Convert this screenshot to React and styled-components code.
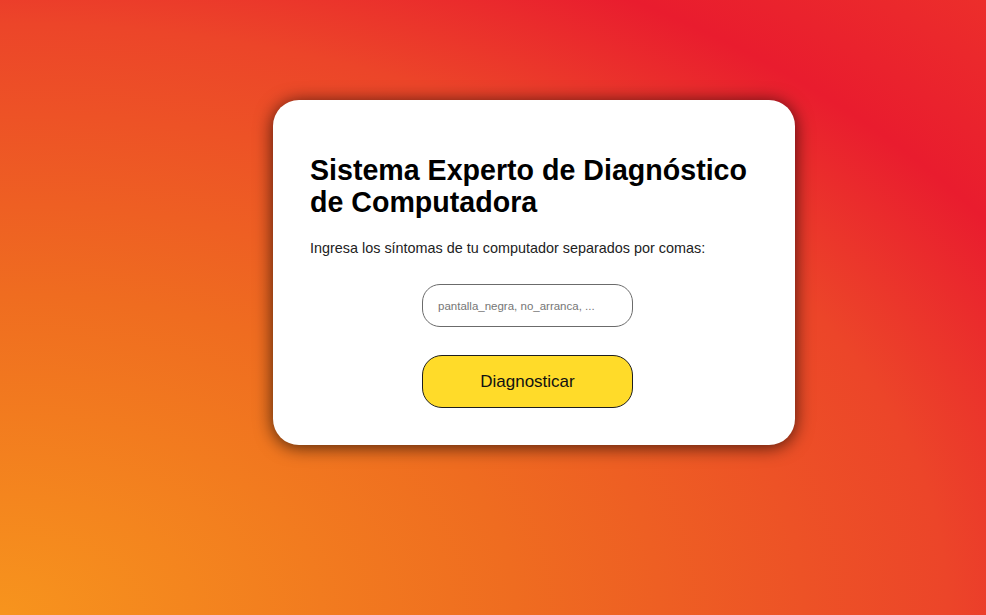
import React, { useState } from 'react';
import styled, { createGlobalStyle } from 'styled-components';

const GlobalStyle = createGlobalStyle`
  html, body {
    margin: 0;
    padding: 0;
    height: 100%;
  }

  body {
    font-family: 'Liberation Sans', Arial, sans-serif;
  }
`;

const Page = styled.div`
  width: 100%;
  min-height: 615px;
  display: flex;
  justify-content: center;
  align-items: flex-start;
  padding: 100px 0 0 82px;
  box-sizing: border-box;
  background: radial-gradient(
    ellipse at 0% 100%,
    #f7941d 0%,
    #ef6c20 37%,
    #ec4529 68%,
    #e91c2e 84%,
    #ec2e2b 100%
  );
`;

const Card = styled.div`
  width: 522px;
  box-sizing: border-box;
  padding: 54px 37px 37px 37px;
  background-color: #ffffff;
  border-radius: 26px;
  box-shadow: 0 2px 18px rgba(0, 0, 0, 0.7);
  display: flex;
  flex-direction: column;
`;

const Title = styled.h1`
  margin: 0;
  font-size: 28.6px;
  line-height: 32px;
  font-weight: bold;
  color: #000000;
`;

const Hint = styled.p`
  margin: 22px 0 0 0;
  font-size: 14.4px;
  line-height: 16px;
  color: #222222;
`;

const Form = styled.form`
  align-self: center;
  margin: 28px 13px 0 0;
  display: flex;
  flex-direction: column;
  gap: 28px;
  width: 211px;
`;

const SymptomInput = styled.input`
  width: 100%;
  height: 43px;
  box-sizing: border-box;
  padding: 0 15px;
  border: 1px solid #6b6b6b;
  border-radius: 18px;
  font-family: 'Liberation Sans', Arial, sans-serif;
  font-size: 11.5px;
  color: #222222;
  outline: none;

  &::placeholder {
    color: #767676;
  }
`;

const SubmitButton = styled.button`
  width: 100%;
  height: 53px;
  box-sizing: border-box;
  border: 1px solid #1e1e1e;
  border-radius: 20px;
  background-color: #ffdb29;
  font-family: 'Liberation Sans', Arial, sans-serif;
  font-size: 17px;
  color: #111111;
  cursor: pointer;
`;

const App = () => {
  const [symptoms, setSymptoms] = useState('');

  const handleSubmit = (e) => {
    e.preventDefault();
  };

  return (
    <Page>
      <GlobalStyle />
      <Card>
        <Title>Sistema Experto de Diagnóstico de Computadora</Title>
        <Hint>Ingresa los síntomas de tu computador separados por comas:</Hint>
        <Form onSubmit={handleSubmit}>
          <SymptomInput
            type='text'
            value={symptoms}
            onChange={(e) => setSymptoms(e.target.value)}
            placeholder='pantalla_negra, no_arranca, ...'
          />
          <SubmitButton type='submit'>Diagnosticar</SubmitButton>
        </Form>
      </Card>
    </Page>
  );
};

export default App;
